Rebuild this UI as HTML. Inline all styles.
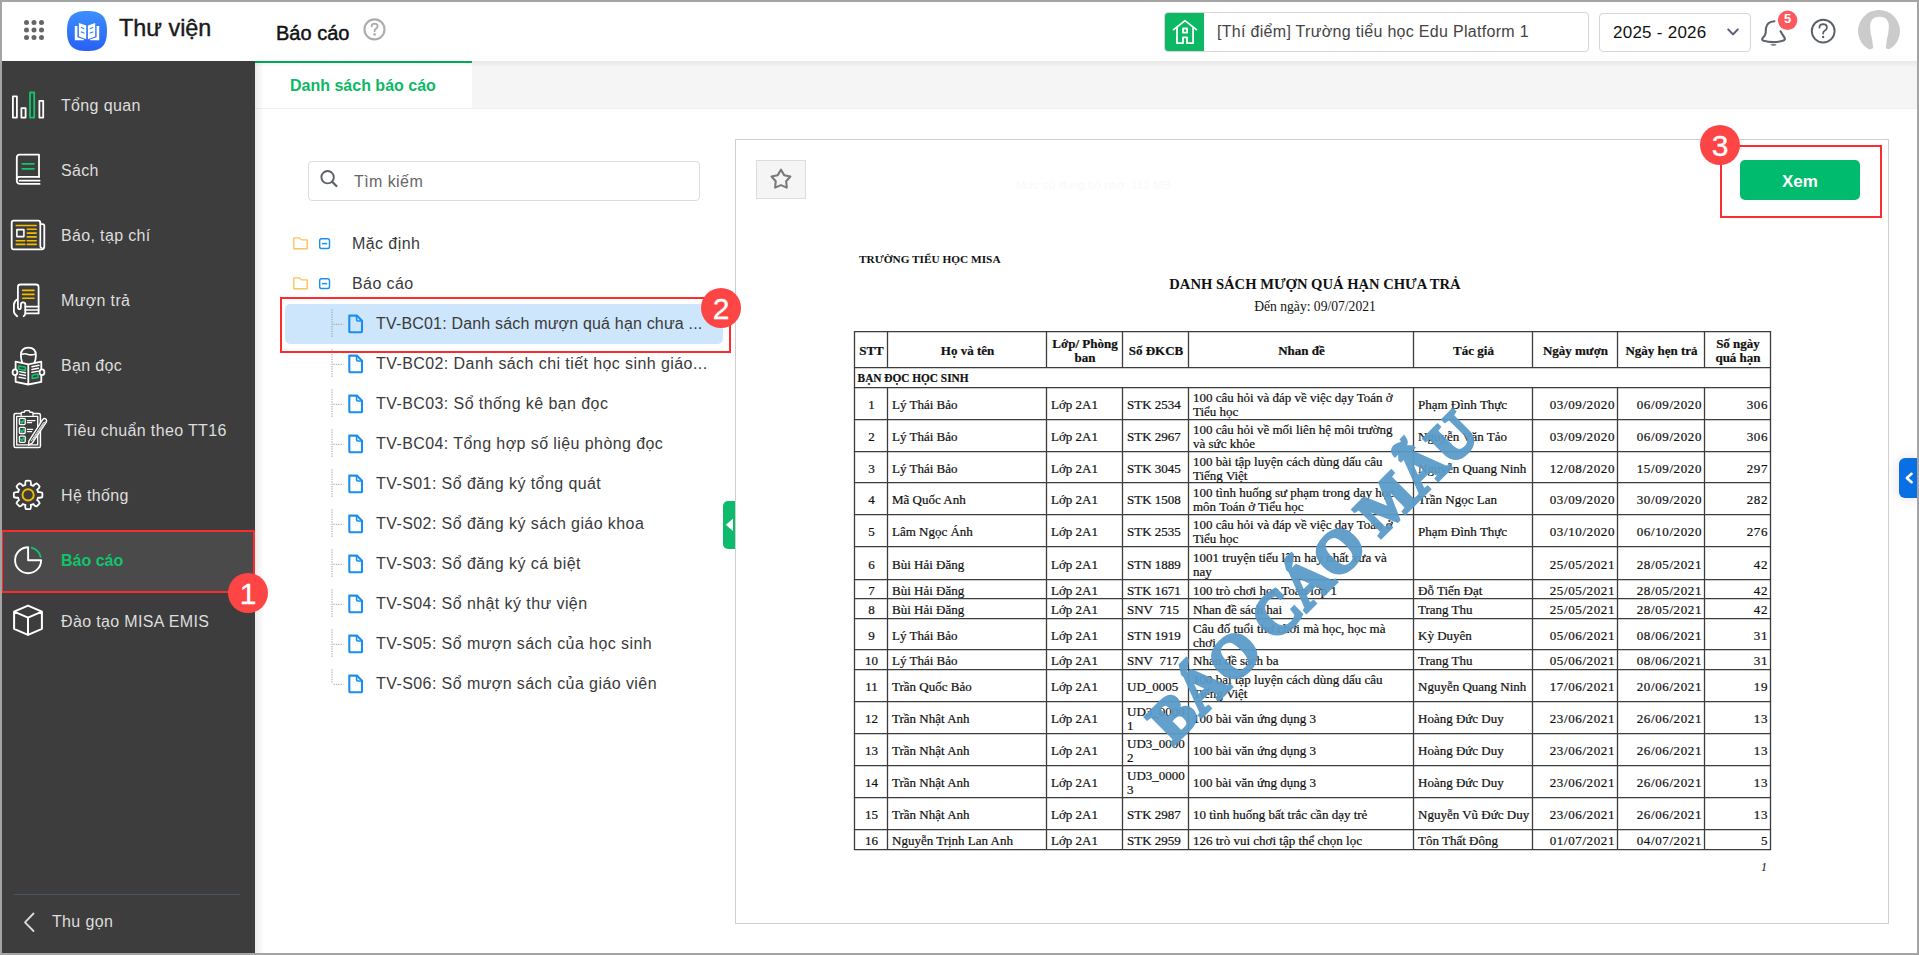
<!DOCTYPE html>
<html><head><meta charset="utf-8">
<style>
*{box-sizing:border-box;margin:0;padding:0}
html,body{width:1919px;height:955px;overflow:hidden;background:#fff;font-family:"Liberation Sans",sans-serif}
.abs{position:absolute}
#frame{position:absolute;left:0;top:0;width:1919px;height:955px;border:2px solid #a4a4a4;overflow:hidden;background:#fff}
#hdr{position:absolute;left:0;top:0;width:1915px;height:59px;background:#fff}
#side{position:absolute;left:0;top:59px;width:253px;height:892px;background:#3d3d3d}
#tabs{position:absolute;left:253px;top:59px;width:1662px;height:48px;background:#f5f5f5}
#tab1{position:absolute;left:0;top:0;width:217px;height:48px;background:#fff;border-top:2px solid #00b25c}
#tab1 span{position:absolute;left:35px;top:14px;font-size:16px;font-weight:bold;color:#0cb864}
.shadow{position:absolute;left:253px;top:59px;width:1662px;height:6px;background:linear-gradient(rgba(0,0,0,0.06),rgba(0,0,0,0))}
.mt{position:absolute;left:59px;font-size:16px;color:#dedede;white-space:nowrap;line-height:16px;letter-spacing:0.35px;margin-top:-1px}
.tr{position:absolute;font-size:16px;color:#3a3a3a;white-space:nowrap;line-height:16px;letter-spacing:0.42px;margin-top:-1px}
.badge{position:absolute;width:40px;height:40px;border-radius:50%;background:#fe4546;color:#fff;font-size:30px;text-align:center;line-height:42.5px;-webkit-text-stroke:0.3px #fff}
.redbox{position:absolute;border:2px solid #fd2b2e}
.c{position:absolute;font-family:"Liberation Serif",serif;font-size:13px;line-height:14px;color:#111;white-space:nowrap;-webkit-text-stroke:0.22px #111}
.doc{position:absolute;font-family:"Liberation Serif",serif;color:#111;white-space:nowrap}
</style></head><body>
<div id="frame">
  <div id="hdr">
    <svg class="abs" style="left:22px;top:18px" width="22" height="22" viewBox="0 0 22 22" fill="#666">
      <circle cx="2.5" cy="2.5" r="2.5"/><circle cx="10" cy="2.5" r="2.5"/><circle cx="17.5" cy="2.5" r="2.5"/>
      <circle cx="2.5" cy="10" r="2.5"/><circle cx="10" cy="10" r="2.5"/><circle cx="17.5" cy="10" r="2.5"/>
      <circle cx="2.5" cy="17.5" r="2.5"/><circle cx="10" cy="17.5" r="2.5"/><circle cx="17.5" cy="17.5" r="2.5"/>
    </svg>
    
    <div class="abs" style="left:117px;top:13px;font-size:23.4px;color:#1a1a1a;-webkit-text-stroke:0.4px #1a1a1a">Thư viện</div>
    <div class="abs" style="left:274px;top:20px;font-size:20px;color:#111;-webkit-text-stroke:0.45px #111">Báo cáo</div>
    <svg class="abs" style="left:-2px;top:-2px" width="400" height="62"><circle cx="374.5" cy="29.4" r="10" fill="none" stroke="#adadad" stroke-width="2.1"/><path d="M371.6 26.2 Q371.8 23.6 374.6 23.6 Q377.6 23.7 377.6 26.2 Q377.6 27.9 375.8 28.9 Q374.6 29.6 374.6 31.3" fill="none" stroke="#adadad" stroke-width="1.9" stroke-linecap="round"/><circle cx="374.6" cy="34.4" r="1.3" fill="#adadad"/></svg>
    <div class="abs" style="left:1162px;top:10px;width:425px;height:40px;border:1px solid #d6d6d6;border-radius:4px;overflow:hidden">
      <div class="abs" style="left:0;top:0;width:39px;height:40px;background:#0cb864"></div>
      <div class="abs" style="left:52px;top:10px;font-size:16px;color:#444;white-space:nowrap;letter-spacing:0.3px">[Thí điểm] Trường tiểu học Edu Platform 1</div>
    </div>
    <div class="abs" style="left:1597px;top:11px;width:152px;height:39px;border:1px solid #d6d6d6;border-radius:4px">
      <div class="abs" style="left:13px;top:9px;font-size:17px;color:#111;letter-spacing:0.25px">2025 - 2026</div>
    </div>
    <svg class="abs" style="left:-2px;top:-2px" width="1919" height="62">
      <defs><linearGradient id="lg" x1="0" y1="0" x2="0" y2="1"><stop offset="0" stop-color="#3c8fff"/><stop offset="1" stop-color="#285ff5"/></linearGradient></defs>
      <path d="M87 11 C101.5 11 107 16.5 107 31 C107 45.5 101.5 51 87 51 C72.5 51 67 45.5 67 31 C67 16.5 72.5 11 87 11 Z" fill="url(#lg)"/>
      <g fill="#fff">
        <path d="M74.8 26 H77.4 V37.2 L84.2 39.4 L83.8 40.2 H74.8 Z"/>
        <path d="M78.9 22.9 L86.2 25.6 V39.3 L78.9 36.4 Z"/>
        <path d="M87.9 25.6 L95.2 22.9 V36.4 L87.9 39.3 Z"/>
        <path d="M99.2 26 H96.6 V37.2 L89.8 39.4 L90.2 40.2 H99.2 Z"/>
      </g>
      <g stroke="#3a80fb" stroke-width="1.1" stroke-linecap="round">
        <path d="M81.2 27.6 L84 28.8 M81.2 31.9 L84 33.1 M90.1 28.8 L92.9 27.6 M90.1 33.1 L92.9 31.9"/>
      </g>
      <!-- house -->
      <g fill="none" stroke="#fff" stroke-width="1.8" stroke-linecap="round" stroke-linejoin="round">
        <path d="M1173.6 29.6 L1185 20.6 L1196.4 29.6"/>
        <path d="M1177 27.6 V43.2 H1183 V37.4 H1187 V43.2 H1193.1 V27.6"/>
        <rect x="1183" y="28.5" width="4.1" height="4.2"/>
      </g>
      <!-- chevron -->
      <path d="M1728.2 29.4 L1733 34.4 L1737.8 29.4" fill="none" stroke="#5a5c78" stroke-width="2" stroke-linecap="round" stroke-linejoin="round"/>
      <!-- bell -->
      <path d="M1774.4 21.3 Q1767.2 21.8 1766.1 27.6 Q1765.7 30.6 1765.7 32.8 Q1765.3 35.4 1762.7 38 Q1761.3 39.9 1763.6 40.7 Q1768 42.1 1773.5 42.1 Q1779 42.1 1783.5 40.5 Q1785.5 39.7 1784.6 37.9 L1780.5 31.3" fill="none" stroke="#5c6370" stroke-width="2.1" stroke-linecap="round" stroke-linejoin="round"/>
      <path d="M1770.3 44.2 H1776.7 Q1775.6 45.8 1773.5 45.8 Q1771.4 45.8 1770.3 44.2 Z" fill="#5c6370"/>
      <circle cx="1787.6" cy="20.3" r="9.7" fill="#fd585d"/>
      <text x="1787.7" y="23.2" font-size="13" font-weight="bold" fill="#fff" text-anchor="middle" font-family="Liberation Sans">5</text>
      <!-- help -->
      <circle cx="1823.2" cy="31.1" r="11.4" fill="none" stroke="#5a6069" stroke-width="1.9"/>
      <path d="M1819.4 27.6 Q1819.6 24.2 1823.1 24.2 Q1826.9 24.3 1826.9 27.5 Q1826.9 29.6 1824.6 30.8 Q1823.1 31.7 1823.1 33.6" fill="none" stroke="#5a6069" stroke-width="1.8" stroke-linecap="round"/>
      <circle cx="1823.1" cy="37" r="1.2" fill="#5a6069"/>
      <!-- avatar -->
      <circle cx="1879" cy="31" r="21" fill="#cbcbcb"/>
      <path d="M1873.4 50 L1872.2 40 Q1870.2 33 1870.1 26 Q1870.3 16.7 1879.5 16.7 Q1888.7 16.7 1888.9 26 Q1888.8 33 1886.8 40 L1885.6 50 Z" fill="#fff"/>
      <ellipse cx="1879.5" cy="56.5" rx="14.5" ry="9.5" fill="#fff"/>
    </svg>
  </div>
  <div id="side"></div>
  <div id="tabs"><div id="tab1"><span>Danh sách báo cáo</span></div></div>
  <div class="shadow"></div>
  <div class="abs" style="left:253px;top:106px;width:1662px;height:1px;background:#f0f0f0"></div>
  <div class="abs" style="left:253px;top:59px;width:9px;height:892px;background:linear-gradient(90deg,rgba(0,0,0,0.08),rgba(0,0,0,0))"></div>

  <!-- sidebar -->
  <div class="abs" style="left:0;top:529px;width:253px;height:62px;background:#4a4a4a"></div>

  <svg class="abs" style="left:-2px;top:-2px" width="260" height="955" fill="none" stroke="#fff" stroke-width="1.8" stroke-linejoin="round" stroke-linecap="round">
    <!-- tong quan -->
    <rect x="12.9" y="96.4" width="4" height="21.2"/>
    <rect x="21.4" y="108.2" width="4.2" height="9.4"/>
    <rect x="30" y="92.5" width="4.2" height="25.1" stroke="#12c56f"/>
    <rect x="39.4" y="100.8" width="3.8" height="16.8"/>
    <!-- sach -->
    <path d="M39 176.9 V154.6 H19.6 Q16.8 154.6 16.8 157.6 V180.4 Q16.8 183.9 20.4 183.9 H39.6"/>
    <path d="M39 176.9 H19.2 Q16.8 176.9 16.8 179.3"/>
    <path d="M19.6 180.7 H39.6" stroke-width="1.7"/>
    <path d="M22.3 163.8 H33.9 M22.3 168.8 H33.9" stroke="#12c56f" stroke-width="1.8"/>
    <!-- bao tap chi -->
    <path d="M40.3 222.6 Q40.3 220.6 38.3 220.6 H13.7 Q11.7 220.6 11.7 222.6 V247.2 Q11.7 249.3 13.8 249.3 H41.6 Q44.3 249.3 44.3 246.6 V226 Q44.3 224.2 42.6 224.2 H40.6"/>
    <path d="M40.3 222.6 V246.2 Q40.3 247.6 41.6 247.8" stroke-width="1.7"/>
    <path d="M16.3 225.5 H36.2 M27.3 229.2 H36.2 M27.3 233.1 H36.2 M27.3 236.9 H36.2 M16.3 240.7 H24.8 M27.3 240.7 H36.2 M16.3 244.4 H24.8 M27.3 244.4 H36.2" stroke="#f2bd00" stroke-width="1.6"/>
    <rect x="16.9" y="229.6" width="7" height="7" stroke-width="1.6"/>
    <!-- muon tra -->
    <path d="M17.9 307.2 V287 Q17.9 284.5 20.5 284.5 H36 Q38.6 284.5 38.6 287 V313.4 H25.3"/>
    <path d="M25.3 306.6 H38.6 M25.3 310 H38.6" stroke-width="1.7"/>
    <path d="M22.7 290.4 H34 M22.7 294.4 H34 M22.7 298.3 H34" stroke="#f2bd00" stroke-width="1.6"/>
    <path d="M17.9 307 Q17.9 309.2 19.4 309.2 Q20.9 309.2 20.9 307 V304.5 Q20.9 302.4 23.1 302.4 Q25.3 302.4 25.3 304.5 V313.5 Q25.3 315 23.6 316.3"/>
    <path d="M17.1 299.5 Q13.9 301.5 13.9 305 V311.5 Q13.9 313.6 17.2 316.3"/>
    <!-- ban doc -->
    <path d="M22.2 362.4 Q20.9 359.2 20.9 355.3 Q20.9 347.7 28.4 347.7 Q35.9 347.7 35.9 355.3 Q35.9 359.2 34.6 362.4"/>
    <path d="M21.3 354.6 Q24.8 353.1 27.4 354.3 Q30 355.5 35.4 354.2" stroke-width="1.6"/>
    <path d="M28.3 364.3 L15.6 361.7 V381.9 L28.3 384.5 L41.3 381.9 V361.7 Z M28.3 364.3 V384.5"/>
    <ellipse cx="15" cy="372.2" rx="2.4" ry="2.9" fill="#3d3d3d"/>
    <ellipse cx="42" cy="372.2" rx="2.4" ry="2.9" fill="#3d3d3d"/>
    <path d="M18.6 365.9 L25.4 367.3 V370.4 L18.6 369 Z" stroke="#12c56f" stroke-width="1.5"/>
    <path d="M32.2 375.2 L38 374 V377.4 L32.2 378.6 Z" stroke="#12c56f" stroke-width="1.5"/>
    <path d="M19.6 371.6 L25.4 372.7 M19.6 374.4 L25.4 375.5 M19 377.3 L25.4 378.4 M31.9 366.7 L39 365.3 M31.9 369.5 L38.4 368.3 M31.9 372.3 L38.4 371.1" stroke-width="1.4"/>
    <!-- tieu chuan -->
    <rect x="14" y="413.6" width="26.4" height="34" rx="1.6" stroke-width="1.5"/>
    <rect x="16.7" y="416.4" width="21" height="28.4" stroke-width="1.3"/>
    <path d="M21.2 415.2 V413 Q21.2 412.2 22.2 412.2 H24.3 L25 410.6 H29.2 L29.9 412.2 H32 Q33 412.2 33 413 V415.2" stroke-width="1.4" fill="#3d3d3d"/>
    <rect x="19.4" y="418.4" width="5.8" height="6.2" rx="1" stroke-width="1.3"/>
    <rect x="19.4" y="427.3" width="5.8" height="6.2" rx="1" stroke-width="1.3"/>
    <rect x="19.4" y="436.1" width="5.8" height="6.2" rx="1" stroke-width="1.3"/>
    <path d="M20.6 421.3 L21.9 423 L24 420 M20.6 430.2 L21.9 431.9 L24 428.9 M20.6 439 L21.9 440.7 L24 437.7" stroke="#12c56f" stroke-width="1.7"/>
    <path d="M27.4 420.6 H35 M27.4 422.6 H31.6 M27.4 429.4 H32.6 M27.4 431.6 H31.6" stroke-width="1.2"/>
    <path d="M42.8 419.4 Q44.6 417.6 46.3 419.6 Q47.1 420.8 46.3 422.1 L32.2 443.2 L28.7 445.2 L28.9 441.2 Z" stroke-width="1.4" fill="#3d3d3d"/>
    <path d="M43.4 422.6 L31.2 441 M45.2 421.6 L32.9 440" stroke-width="0.8"/>
    <!-- he thong -->
    <path d="M25.41 484.85 Q24.93 482.43 25.86 480.78 A14.3 14.3 0 0 1 30.34 480.78 Q31.27 482.43 30.79 484.85 A10.4 10.4 0 0 1 33.30 485.89 Q34.68 483.84 36.51 483.33 A14.3 14.3 0 0 1 39.67 486.49 Q39.16 488.32 37.11 489.70 A10.4 10.4 0 0 1 38.15 492.21 Q40.57 491.73 42.22 492.66 A14.3 14.3 0 0 1 42.22 497.14 Q40.57 498.07 38.15 497.59 A10.4 10.4 0 0 1 37.11 500.10 Q39.16 501.48 39.67 503.31 A14.3 14.3 0 0 1 36.51 506.47 Q34.68 505.96 33.30 503.91 A10.4 10.4 0 0 1 30.79 504.95 Q31.27 507.37 30.34 509.02 A14.3 14.3 0 0 1 25.86 509.02 Q24.93 507.37 25.41 504.95 A10.4 10.4 0 0 1 22.90 503.91 Q21.52 505.96 19.69 506.47 A14.3 14.3 0 0 1 16.53 503.31 Q17.04 501.48 19.09 500.10 A10.4 10.4 0 0 1 18.05 497.59 Q15.63 498.07 13.98 497.14 A14.3 14.3 0 0 1 13.98 492.66 Q15.63 491.73 18.05 492.21 A10.4 10.4 0 0 1 19.09 489.70 Q17.04 488.32 16.53 486.49 A14.3 14.3 0 0 1 19.69 483.33 Q21.52 483.84 22.90 485.89 A10.4 10.4 0 0 1 25.41 484.85 Z" stroke-width="1.8"/>
    <circle cx="28.1" cy="494.9" r="5.6" stroke="#f2bd00" stroke-width="1.9"/>
    <!-- bao cao -->
    <path d="M28.1 547.2 V560.2 H41.1 A13 13 0 1 1 28.1 547.2" stroke-width="1.9"/>
    <path d="M31.6 547.7 A13 13 0 0 1 40.6 556.7" stroke="#12c56f" stroke-width="1.9"/>
    <!-- cube -->
    <path d="M28 605.6 L41.9 611.7 V628.8 L28 634.9 L14.1 628.8 V611.7 Z M14.1 611.7 L28 617.6 L41.9 611.7 M28 617.6 V634.9" stroke-width="2"/>
    <!-- thu gon -->
    <path d="M33.5 913.5 L25 922.3 L33.5 931" stroke="#ddd"/>
  </svg>

  <div class="mt" style="top:97px">Tổng quan</div>
  <div class="mt" style="top:162px">Sách</div>
  <div class="mt" style="top:227px">Báo, tạp chí</div>
  <div class="mt" style="top:292px">Mượn trả</div>
  <div class="mt" style="top:357px">Bạn đọc</div>
  <div class="mt" style="top:422px;left:62px">Tiêu chuẩn theo TT16</div>
  <div class="mt" style="top:487px">Hệ thống</div>
  <div class="mt" style="top:552px;color:#10c46c;font-weight:bold;letter-spacing:0">Báo cáo</div>
  <div class="mt" style="top:613px">Đào tạo MISA EMIS</div>
  <div class="abs" style="left:12px;top:892px;width:226px;height:1px;background:#4b5662"></div>
  <div class="mt" style="top:913px;left:50px">Thu gọn</div>

  <!-- tree -->
  <div class="abs" style="left:306px;top:159px;width:392px;height:40px;border:1px solid #dcdcdc;border-radius:4px"></div>
  <div class="tr" style="left:352px;top:173px;color:#666">Tìm kiếm</div>
  <div class="abs" style="left:283px;top:302px;width:438px;height:40px;background:#cde6fb;border-radius:5px"></div>
  <svg class="abs" style="left:-2px;top:-2px" width="760" height="955" fill="none"><path d="M293.8 248.7 V237.9 H299.6 L301.4 239.9 H307.2 V248.7 Z" stroke="#fcc45a" stroke-width="1.4" stroke-linejoin="round"/><rect x="319.7" y="238.70000000000002" width="9.8" height="9.8" rx="1.8" stroke="#1c8ff0" stroke-width="1.4"/><path d="M322 243.6 H327.2" stroke="#1c8ff0" stroke-width="1.5"/><path d="M293.8 288.7 V277.9 H299.6 L301.4 279.9 H307.2 V288.7 Z" stroke="#fcc45a" stroke-width="1.4" stroke-linejoin="round"/><rect x="319.7" y="278.7" width="9.8" height="9.8" rx="1.8" stroke="#1c8ff0" stroke-width="1.4"/><path d="M322 283.59999999999997 H327.2" stroke="#1c8ff0" stroke-width="1.5"/><path d="M349.3 315.6 H356.8 L362 320.8 V331.6 Q362 332.20000000000005 361.4 332.20000000000005 H349.9 Q349.3 332.20000000000005 349.3 331.6 Z" stroke="#1a8ef0" stroke-width="2.1" stroke-linejoin="round"/><path d="M356.6 315.8 V319.8 Q356.6 321.0 357.8 321.0 H361.8" stroke="#1a8ef0" stroke-width="1.6"/><path d="M332 309.3 V337.3" stroke="#999" stroke-width="1" stroke-dasharray="1.2 1.2"/><path d="M333.5 324.3 H343.5" stroke="#999" stroke-width="1" stroke-dasharray="1.2 1.2"/><path d="M349.3 355.6 H356.8 L362 360.8 V371.6 Q362 372.20000000000005 361.4 372.20000000000005 H349.9 Q349.3 372.20000000000005 349.3 371.6 Z" stroke="#1a8ef0" stroke-width="2.1" stroke-linejoin="round"/><path d="M356.6 355.8 V359.8 Q356.6 361.0 357.8 361.0 H361.8" stroke="#1a8ef0" stroke-width="1.6"/><path d="M332 349.3 V377.3" stroke="#999" stroke-width="1" stroke-dasharray="1.2 1.2"/><path d="M333.5 364.3 H343.5" stroke="#999" stroke-width="1" stroke-dasharray="1.2 1.2"/><path d="M349.3 395.6 H356.8 L362 400.8 V411.6 Q362 412.20000000000005 361.4 412.20000000000005 H349.9 Q349.3 412.20000000000005 349.3 411.6 Z" stroke="#1a8ef0" stroke-width="2.1" stroke-linejoin="round"/><path d="M356.6 395.8 V399.8 Q356.6 401.0 357.8 401.0 H361.8" stroke="#1a8ef0" stroke-width="1.6"/><path d="M332 389.3 V417.3" stroke="#999" stroke-width="1" stroke-dasharray="1.2 1.2"/><path d="M333.5 404.3 H343.5" stroke="#999" stroke-width="1" stroke-dasharray="1.2 1.2"/><path d="M349.3 435.6 H356.8 L362 440.8 V451.6 Q362 452.20000000000005 361.4 452.20000000000005 H349.9 Q349.3 452.20000000000005 349.3 451.6 Z" stroke="#1a8ef0" stroke-width="2.1" stroke-linejoin="round"/><path d="M356.6 435.8 V439.8 Q356.6 441.0 357.8 441.0 H361.8" stroke="#1a8ef0" stroke-width="1.6"/><path d="M332 429.3 V457.3" stroke="#999" stroke-width="1" stroke-dasharray="1.2 1.2"/><path d="M333.5 444.3 H343.5" stroke="#999" stroke-width="1" stroke-dasharray="1.2 1.2"/><path d="M349.3 475.6 H356.8 L362 480.8 V491.6 Q362 492.20000000000005 361.4 492.20000000000005 H349.9 Q349.3 492.20000000000005 349.3 491.6 Z" stroke="#1a8ef0" stroke-width="2.1" stroke-linejoin="round"/><path d="M356.6 475.8 V479.8 Q356.6 481.0 357.8 481.0 H361.8" stroke="#1a8ef0" stroke-width="1.6"/><path d="M332 469.3 V497.3" stroke="#999" stroke-width="1" stroke-dasharray="1.2 1.2"/><path d="M333.5 484.3 H343.5" stroke="#999" stroke-width="1" stroke-dasharray="1.2 1.2"/><path d="M349.3 515.5999999999999 H356.8 L362 520.8 V531.5999999999999 Q362 532.1999999999999 361.4 532.1999999999999 H349.9 Q349.3 532.1999999999999 349.3 531.5999999999999 Z" stroke="#1a8ef0" stroke-width="2.1" stroke-linejoin="round"/><path d="M356.6 515.8 V519.8 Q356.6 520.9999999999999 357.8 520.9999999999999 H361.8" stroke="#1a8ef0" stroke-width="1.6"/><path d="M332 509.29999999999995 V537.3" stroke="#999" stroke-width="1" stroke-dasharray="1.2 1.2"/><path d="M333.5 524.3 H343.5" stroke="#999" stroke-width="1" stroke-dasharray="1.2 1.2"/><path d="M349.3 555.5999999999999 H356.8 L362 560.8 V571.5999999999999 Q362 572.1999999999999 361.4 572.1999999999999 H349.9 Q349.3 572.1999999999999 349.3 571.5999999999999 Z" stroke="#1a8ef0" stroke-width="2.1" stroke-linejoin="round"/><path d="M356.6 555.8 V559.8 Q356.6 560.9999999999999 357.8 560.9999999999999 H361.8" stroke="#1a8ef0" stroke-width="1.6"/><path d="M332 549.3 V577.3" stroke="#999" stroke-width="1" stroke-dasharray="1.2 1.2"/><path d="M333.5 564.3 H343.5" stroke="#999" stroke-width="1" stroke-dasharray="1.2 1.2"/><path d="M349.3 595.5999999999999 H356.8 L362 600.8 V611.5999999999999 Q362 612.1999999999999 361.4 612.1999999999999 H349.9 Q349.3 612.1999999999999 349.3 611.5999999999999 Z" stroke="#1a8ef0" stroke-width="2.1" stroke-linejoin="round"/><path d="M356.6 595.8 V599.8 Q356.6 600.9999999999999 357.8 600.9999999999999 H361.8" stroke="#1a8ef0" stroke-width="1.6"/><path d="M332 589.3 V617.3" stroke="#999" stroke-width="1" stroke-dasharray="1.2 1.2"/><path d="M333.5 604.3 H343.5" stroke="#999" stroke-width="1" stroke-dasharray="1.2 1.2"/><path d="M349.3 635.5999999999999 H356.8 L362 640.8 V651.5999999999999 Q362 652.1999999999999 361.4 652.1999999999999 H349.9 Q349.3 652.1999999999999 349.3 651.5999999999999 Z" stroke="#1a8ef0" stroke-width="2.1" stroke-linejoin="round"/><path d="M356.6 635.8 V639.8 Q356.6 640.9999999999999 357.8 640.9999999999999 H361.8" stroke="#1a8ef0" stroke-width="1.6"/><path d="M332 629.3 V657.3" stroke="#999" stroke-width="1" stroke-dasharray="1.2 1.2"/><path d="M333.5 644.3 H343.5" stroke="#999" stroke-width="1" stroke-dasharray="1.2 1.2"/><path d="M349.3 675.5999999999999 H356.8 L362 680.8 V691.5999999999999 Q362 692.1999999999999 361.4 692.1999999999999 H349.9 Q349.3 692.1999999999999 349.3 691.5999999999999 Z" stroke="#1a8ef0" stroke-width="2.1" stroke-linejoin="round"/><path d="M356.6 675.8 V679.8 Q356.6 680.9999999999999 357.8 680.9999999999999 H361.8" stroke="#1a8ef0" stroke-width="1.6"/><path d="M332 669.3 V683.3" stroke="#999" stroke-width="1" stroke-dasharray="1.2 1.2"/><path d="M333.5 684.3 H343.5" stroke="#999" stroke-width="1" stroke-dasharray="1.2 1.2"/>
    <circle cx="327.6" cy="177.2" r="6.2" stroke="#5a5f69" stroke-width="1.9"/>
    <path d="M332.2 181.8 L336.4 186" stroke="#5a5f69" stroke-width="2.3" stroke-linecap="round"/>
  </svg>
  <div class="tr" style="left:350px;top:235px">Mặc định</div>
  <div class="tr" style="left:350px;top:275px">Báo cáo</div>
  <div class="tr" style="left:374px;top:315px;letter-spacing:0.18px">TV-BC01: Danh sách mượn quá hạn chưa ...</div>
  <div class="tr" style="left:374px;top:355px">TV-BC02: Danh sách chi tiết học sinh giáo...</div>
  <div class="tr" style="left:374px;top:395px">TV-BC03: Sổ thống kê bạn đọc</div>
  <div class="tr" style="left:374px;top:435px">TV-BC04: Tổng hợp số liệu phòng đọc</div>
  <div class="tr" style="left:374px;top:475px">TV-S01: Sổ đăng ký tổng quát</div>
  <div class="tr" style="left:374px;top:515px">TV-S02: Sổ đăng ký sách giáo khoa</div>
  <div class="tr" style="left:374px;top:555px">TV-S03: Sổ đăng ký cá biệt</div>
  <div class="tr" style="left:374px;top:595px">TV-S04: Sổ nhật ký thư viện</div>
  <div class="tr" style="left:374px;top:635px">TV-S05: Sổ mượn sách của học sinh</div>
  <div class="tr" style="left:374px;top:675px">TV-S06: Sổ mượn sách của giáo viên</div>

  <!-- report -->
  <div class="abs" style="left:1014px;top:176px;font-size:11.6px;color:#f9f9f9;white-space:nowrap">Mức sử dụng bộ nhớ: 112 MB</div>
  <div class="abs" style="left:733px;top:137px;width:1154px;height:785px;border:1px solid #cfcfcf"></div>
  <div class="abs" style="left:754px;top:158px;width:50px;height:39px;border:1px solid #ddd;background:#f5f5f5"></div>
    <svg class="abs" style="left:-2px;top:-2px" width="1919" height="955" fill="none"><polygon points="780.95,169.70 784.18,175.15 790.37,176.54 786.18,181.30 786.77,187.61 780.95,185.10 775.13,187.61 775.72,181.30 771.53,176.54 777.72,175.15" stroke="#7a7a7a" stroke-width="2.1" stroke-linejoin="round"/></svg>
  <div class="abs" style="left:1738px;top:158px;width:120px;height:40px;border-radius:5px;background:#00bb6e;color:#fff;font-weight:bold;font-size:17px;text-align:center;line-height:43px">Xem</div>
  <div class="doc" style="left:857px;top:251px;font-size:11.3px;font-weight:bold">TRƯỜNG TIỂU HỌC MISA</div>
  <div class="doc" style="left:1065px;width:496px;text-align:center;top:274px;font-size:14.6px;font-weight:bold">DANH SÁCH MƯỢN QUÁ HẠN CHƯA TRẢ</div>
  <div class="doc" style="left:1065px;width:496px;text-align:center;top:297px;font-size:13.6px">Đến ngày: 09/07/2021</div>
<svg class="abs" style="left:-2px;top:-2px" width="1919" height="955"><g stroke="#3c3c3c" stroke-width="1.3"><line x1="853.9" y1="331.7" x2="1771.1" y2="331.7"/><line x1="853.9" y1="367.7" x2="1771.1" y2="367.7"/><line x1="853.9" y1="387.7" x2="1771.1" y2="387.7"/><line x1="853.9" y1="419.7" x2="1771.1" y2="419.7"/><line x1="853.9" y1="451.7" x2="1771.1" y2="451.7"/><line x1="853.9" y1="482.7" x2="1771.1" y2="482.7"/><line x1="853.9" y1="514.7" x2="1771.1" y2="514.7"/><line x1="853.9" y1="546.7" x2="1771.1" y2="546.7"/><line x1="853.9" y1="579.7" x2="1771.1" y2="579.7"/><line x1="853.9" y1="598.7" x2="1771.1" y2="598.7"/><line x1="853.9" y1="618.7" x2="1771.1" y2="618.7"/><line x1="853.9" y1="649.7" x2="1771.1" y2="649.7"/><line x1="853.9" y1="669.7" x2="1771.1" y2="669.7"/><line x1="853.9" y1="701.7" x2="1771.1" y2="701.7"/><line x1="853.9" y1="733.7" x2="1771.1" y2="733.7"/><line x1="853.9" y1="765.7" x2="1771.1" y2="765.7"/><line x1="853.9" y1="797.7" x2="1771.1" y2="797.7"/><line x1="853.9" y1="829.7" x2="1771.1" y2="829.7"/><line x1="853.9" y1="849.7" x2="1771.1" y2="849.7"/><line x1="854.5" y1="331.7" x2="854.5" y2="849.7"/><line x1="887.5" y1="331.7" x2="887.5" y2="367.7"/><line x1="887.5" y1="387.7" x2="887.5" y2="849.7"/><line x1="1046.5" y1="331.7" x2="1046.5" y2="367.7"/><line x1="1046.5" y1="387.7" x2="1046.5" y2="849.7"/><line x1="1122.5" y1="331.7" x2="1122.5" y2="367.7"/><line x1="1122.5" y1="387.7" x2="1122.5" y2="849.7"/><line x1="1188.5" y1="331.7" x2="1188.5" y2="367.7"/><line x1="1188.5" y1="387.7" x2="1188.5" y2="849.7"/><line x1="1413.5" y1="331.7" x2="1413.5" y2="367.7"/><line x1="1413.5" y1="387.7" x2="1413.5" y2="849.7"/><line x1="1532.5" y1="331.7" x2="1532.5" y2="367.7"/><line x1="1532.5" y1="387.7" x2="1532.5" y2="849.7"/><line x1="1617.5" y1="331.7" x2="1617.5" y2="367.7"/><line x1="1617.5" y1="387.7" x2="1617.5" y2="849.7"/><line x1="1704.5" y1="331.7" x2="1704.5" y2="367.7"/><line x1="1704.5" y1="387.7" x2="1704.5" y2="849.7"/><line x1="1770.5" y1="331.7" x2="1770.5" y2="849.7"/></g></svg>
<div class="c" style="left:853px;top:342.0px;width:33px;text-align:center;font-weight:bold;">STT</div>
<div class="c" style="left:886px;top:342.0px;width:159px;text-align:center;font-weight:bold;">Họ và tên</div>
<div class="c" style="left:1045px;top:335.0px;width:76px;text-align:center;font-weight:bold;">Lớp/ Phòng<br>ban</div>
<div class="c" style="left:1121px;top:342.0px;width:66px;text-align:center;font-weight:bold;">Số ĐKCB</div>
<div class="c" style="left:1187px;top:342.0px;width:225px;text-align:center;font-weight:bold;">Nhan đề</div>
<div class="c" style="left:1412px;top:342.0px;width:119px;text-align:center;font-weight:bold;">Tác giả</div>
<div class="c" style="left:1531px;top:342.0px;width:85px;text-align:center;font-weight:bold;">Ngày mượn</div>
<div class="c" style="left:1616px;top:342.0px;width:87px;text-align:center;font-weight:bold;">Ngày hẹn trả</div>
<div class="c" style="left:1703px;top:335.0px;width:66px;text-align:center;font-weight:bold;">Số ngày<br>quá hạn</div>
<div class="c" style="left:853px;top:369.0px;padding-left:3px;font-weight:bold;transform:scaleX(0.87);transform-origin:0 0">BẠN ĐỌC HỌC SINH</div>
<div class="c" style="left:853px;top:396.0px;width:33px;text-align:center;">1</div>
<div class="c" style="left:886px;top:396.0px;width:159px;text-align:left;padding-left:4px;">Lý Thái Bảo</div>
<div class="c" style="left:1045px;top:396.0px;width:76px;text-align:left;padding-left:4px;">Lớp 2A1</div>
<div class="c" style="left:1121px;top:396.0px;width:66px;text-align:left;padding-left:4px;">STK 2534</div>
<div class="c" style="left:1187px;top:389.0px;width:225px;text-align:left;padding-left:4px;">100 câu hỏi và đáp về việc dạy Toán ở<br>Tiểu học</div>
<div class="c" style="left:1412px;top:396.0px;width:119px;text-align:left;padding-left:4px;">Phạm Đình Thực</div>
<div class="c" style="left:1531px;top:396.0px;width:85px;text-align:right;padding-right:3px;letter-spacing:0.6px;">03/09/2020</div>
<div class="c" style="left:1616px;top:396.0px;width:87px;text-align:right;padding-right:3px;letter-spacing:0.6px;">06/09/2020</div>
<div class="c" style="left:1703px;top:396.0px;width:66px;text-align:right;padding-right:3px;letter-spacing:0.6px;">306</div>
<div class="c" style="left:853px;top:428.0px;width:33px;text-align:center;">2</div>
<div class="c" style="left:886px;top:428.0px;width:159px;text-align:left;padding-left:4px;">Lý Thái Bảo</div>
<div class="c" style="left:1045px;top:428.0px;width:76px;text-align:left;padding-left:4px;">Lớp 2A1</div>
<div class="c" style="left:1121px;top:428.0px;width:66px;text-align:left;padding-left:4px;">STK 2967</div>
<div class="c" style="left:1187px;top:421.0px;width:225px;text-align:left;padding-left:4px;">100 câu hỏi về mối liên hệ môi trường<br>và sức khỏe</div>
<div class="c" style="left:1412px;top:428.0px;width:119px;text-align:left;padding-left:4px;">Nguyễn Văn Tảo</div>
<div class="c" style="left:1531px;top:428.0px;width:85px;text-align:right;padding-right:3px;letter-spacing:0.6px;">03/09/2020</div>
<div class="c" style="left:1616px;top:428.0px;width:87px;text-align:right;padding-right:3px;letter-spacing:0.6px;">06/09/2020</div>
<div class="c" style="left:1703px;top:428.0px;width:66px;text-align:right;padding-right:3px;letter-spacing:0.6px;">306</div>
<div class="c" style="left:853px;top:459.5px;width:33px;text-align:center;">3</div>
<div class="c" style="left:886px;top:459.5px;width:159px;text-align:left;padding-left:4px;">Lý Thái Bảo</div>
<div class="c" style="left:1045px;top:459.5px;width:76px;text-align:left;padding-left:4px;">Lớp 2A1</div>
<div class="c" style="left:1121px;top:459.5px;width:66px;text-align:left;padding-left:4px;">STK 3045</div>
<div class="c" style="left:1187px;top:452.5px;width:225px;text-align:left;padding-left:4px;">100 bài tập luyện cách dùng dấu câu<br>Tiếng Việt</div>
<div class="c" style="left:1412px;top:459.5px;width:119px;text-align:left;padding-left:4px;">Nguyễn Quang Ninh</div>
<div class="c" style="left:1531px;top:459.5px;width:85px;text-align:right;padding-right:3px;letter-spacing:0.6px;">12/08/2020</div>
<div class="c" style="left:1616px;top:459.5px;width:87px;text-align:right;padding-right:3px;letter-spacing:0.6px;">15/09/2020</div>
<div class="c" style="left:1703px;top:459.5px;width:66px;text-align:right;padding-right:3px;letter-spacing:0.6px;">297</div>
<div class="c" style="left:853px;top:491.0px;width:33px;text-align:center;">4</div>
<div class="c" style="left:886px;top:491.0px;width:159px;text-align:left;padding-left:4px;">Mã Quốc Anh</div>
<div class="c" style="left:1045px;top:491.0px;width:76px;text-align:left;padding-left:4px;">Lớp 2A1</div>
<div class="c" style="left:1121px;top:491.0px;width:66px;text-align:left;padding-left:4px;">STK 1508</div>
<div class="c" style="left:1187px;top:484.0px;width:225px;text-align:left;padding-left:4px;">100 tình huống sư phạm trong dạy học<br>môn Toán ở Tiểu học</div>
<div class="c" style="left:1412px;top:491.0px;width:119px;text-align:left;padding-left:4px;">Trần Ngọc Lan</div>
<div class="c" style="left:1531px;top:491.0px;width:85px;text-align:right;padding-right:3px;letter-spacing:0.6px;">03/09/2020</div>
<div class="c" style="left:1616px;top:491.0px;width:87px;text-align:right;padding-right:3px;letter-spacing:0.6px;">30/09/2020</div>
<div class="c" style="left:1703px;top:491.0px;width:66px;text-align:right;padding-right:3px;letter-spacing:0.6px;">282</div>
<div class="c" style="left:853px;top:523.0px;width:33px;text-align:center;">5</div>
<div class="c" style="left:886px;top:523.0px;width:159px;text-align:left;padding-left:4px;">Lâm Ngọc Ánh</div>
<div class="c" style="left:1045px;top:523.0px;width:76px;text-align:left;padding-left:4px;">Lớp 2A1</div>
<div class="c" style="left:1121px;top:523.0px;width:66px;text-align:left;padding-left:4px;">STK 2535</div>
<div class="c" style="left:1187px;top:516.0px;width:225px;text-align:left;padding-left:4px;">100 câu hỏi và đáp về việc dạy Toán ở<br>Tiểu học</div>
<div class="c" style="left:1412px;top:523.0px;width:119px;text-align:left;padding-left:4px;">Phạm Đình Thực</div>
<div class="c" style="left:1531px;top:523.0px;width:85px;text-align:right;padding-right:3px;letter-spacing:0.6px;">03/10/2020</div>
<div class="c" style="left:1616px;top:523.0px;width:87px;text-align:right;padding-right:3px;letter-spacing:0.6px;">06/10/2020</div>
<div class="c" style="left:1703px;top:523.0px;width:66px;text-align:right;padding-right:3px;letter-spacing:0.6px;">276</div>
<div class="c" style="left:853px;top:555.5px;width:33px;text-align:center;">6</div>
<div class="c" style="left:886px;top:555.5px;width:159px;text-align:left;padding-left:4px;">Bùi Hải Đăng</div>
<div class="c" style="left:1045px;top:555.5px;width:76px;text-align:left;padding-left:4px;">Lớp 2A1</div>
<div class="c" style="left:1121px;top:555.5px;width:66px;text-align:left;padding-left:4px;">STN 1889</div>
<div class="c" style="left:1187px;top:548.5px;width:225px;text-align:left;padding-left:4px;">1001 truyện tiếu lâm hay nhất xưa và<br>nay</div>
<div class="c" style="left:1531px;top:555.5px;width:85px;text-align:right;padding-right:3px;letter-spacing:0.6px;">25/05/2021</div>
<div class="c" style="left:1616px;top:555.5px;width:87px;text-align:right;padding-right:3px;letter-spacing:0.6px;">28/05/2021</div>
<div class="c" style="left:1703px;top:555.5px;width:66px;text-align:right;padding-right:3px;letter-spacing:0.6px;">42</div>
<div class="c" style="left:853px;top:581.5px;width:33px;text-align:center;">7</div>
<div class="c" style="left:886px;top:581.5px;width:159px;text-align:left;padding-left:4px;">Bùi Hải Đăng</div>
<div class="c" style="left:1045px;top:581.5px;width:76px;text-align:left;padding-left:4px;">Lớp 2A1</div>
<div class="c" style="left:1121px;top:581.5px;width:66px;text-align:left;padding-left:4px;">STK 1671</div>
<div class="c" style="left:1187px;top:581.5px;width:225px;text-align:left;padding-left:4px;">100 trò chơi học Toán lớp 1</div>
<div class="c" style="left:1412px;top:581.5px;width:119px;text-align:left;padding-left:4px;">Đỗ Tiến Đạt</div>
<div class="c" style="left:1531px;top:581.5px;width:85px;text-align:right;padding-right:3px;letter-spacing:0.6px;">25/05/2021</div>
<div class="c" style="left:1616px;top:581.5px;width:87px;text-align:right;padding-right:3px;letter-spacing:0.6px;">28/05/2021</div>
<div class="c" style="left:1703px;top:581.5px;width:66px;text-align:right;padding-right:3px;letter-spacing:0.6px;">42</div>
<div class="c" style="left:853px;top:601.0px;width:33px;text-align:center;">8</div>
<div class="c" style="left:886px;top:601.0px;width:159px;text-align:left;padding-left:4px;">Bùi Hải Đăng</div>
<div class="c" style="left:1045px;top:601.0px;width:76px;text-align:left;padding-left:4px;">Lớp 2A1</div>
<div class="c" style="left:1121px;top:601.0px;width:66px;text-align:left;padding-left:4px;">SNV&nbsp; 715</div>
<div class="c" style="left:1187px;top:601.0px;width:225px;text-align:left;padding-left:4px;">Nhan đề sách hai</div>
<div class="c" style="left:1412px;top:601.0px;width:119px;text-align:left;padding-left:4px;">Trang Thu</div>
<div class="c" style="left:1531px;top:601.0px;width:85px;text-align:right;padding-right:3px;letter-spacing:0.6px;">25/05/2021</div>
<div class="c" style="left:1616px;top:601.0px;width:87px;text-align:right;padding-right:3px;letter-spacing:0.6px;">28/05/2021</div>
<div class="c" style="left:1703px;top:601.0px;width:66px;text-align:right;padding-right:3px;letter-spacing:0.6px;">42</div>
<div class="c" style="left:853px;top:626.5px;width:33px;text-align:center;">9</div>
<div class="c" style="left:886px;top:626.5px;width:159px;text-align:left;padding-left:4px;">Lý Thái Bảo</div>
<div class="c" style="left:1045px;top:626.5px;width:76px;text-align:left;padding-left:4px;">Lớp 2A1</div>
<div class="c" style="left:1121px;top:626.5px;width:66px;text-align:left;padding-left:4px;">STN 1919</div>
<div class="c" style="left:1187px;top:619.5px;width:225px;text-align:left;padding-left:4px;">Câu đố tuổi thơ chơi mà học, học mà<br>chơi</div>
<div class="c" style="left:1412px;top:626.5px;width:119px;text-align:left;padding-left:4px;">Kỳ Duyên</div>
<div class="c" style="left:1531px;top:626.5px;width:85px;text-align:right;padding-right:3px;letter-spacing:0.6px;">05/06/2021</div>
<div class="c" style="left:1616px;top:626.5px;width:87px;text-align:right;padding-right:3px;letter-spacing:0.6px;">08/06/2021</div>
<div class="c" style="left:1703px;top:626.5px;width:66px;text-align:right;padding-right:3px;letter-spacing:0.6px;">31</div>
<div class="c" style="left:853px;top:652.0px;width:33px;text-align:center;">10</div>
<div class="c" style="left:886px;top:652.0px;width:159px;text-align:left;padding-left:4px;">Lý Thái Bảo</div>
<div class="c" style="left:1045px;top:652.0px;width:76px;text-align:left;padding-left:4px;">Lớp 2A1</div>
<div class="c" style="left:1121px;top:652.0px;width:66px;text-align:left;padding-left:4px;">SNV&nbsp; 717</div>
<div class="c" style="left:1187px;top:652.0px;width:225px;text-align:left;padding-left:4px;">Nhan đề sách ba</div>
<div class="c" style="left:1412px;top:652.0px;width:119px;text-align:left;padding-left:4px;">Trang Thu</div>
<div class="c" style="left:1531px;top:652.0px;width:85px;text-align:right;padding-right:3px;letter-spacing:0.6px;">05/06/2021</div>
<div class="c" style="left:1616px;top:652.0px;width:87px;text-align:right;padding-right:3px;letter-spacing:0.6px;">08/06/2021</div>
<div class="c" style="left:1703px;top:652.0px;width:66px;text-align:right;padding-right:3px;letter-spacing:0.6px;">31</div>
<div class="c" style="left:853px;top:678.0px;width:33px;text-align:center;">11</div>
<div class="c" style="left:886px;top:678.0px;width:159px;text-align:left;padding-left:4px;">Trần Quốc Bảo</div>
<div class="c" style="left:1045px;top:678.0px;width:76px;text-align:left;padding-left:4px;">Lớp 2A1</div>
<div class="c" style="left:1121px;top:678.0px;width:66px;text-align:left;padding-left:4px;">UD_0005</div>
<div class="c" style="left:1187px;top:671.0px;width:225px;text-align:left;padding-left:4px;">100 bài tập luyện cách dùng dấu câu<br>Tiếng Việt</div>
<div class="c" style="left:1412px;top:678.0px;width:119px;text-align:left;padding-left:4px;">Nguyễn Quang Ninh</div>
<div class="c" style="left:1531px;top:678.0px;width:85px;text-align:right;padding-right:3px;letter-spacing:0.6px;">17/06/2021</div>
<div class="c" style="left:1616px;top:678.0px;width:87px;text-align:right;padding-right:3px;letter-spacing:0.6px;">20/06/2021</div>
<div class="c" style="left:1703px;top:678.0px;width:66px;text-align:right;padding-right:3px;letter-spacing:0.6px;">19</div>
<div class="c" style="left:853px;top:710.0px;width:33px;text-align:center;">12</div>
<div class="c" style="left:886px;top:710.0px;width:159px;text-align:left;padding-left:4px;">Trần Nhật Anh</div>
<div class="c" style="left:1045px;top:710.0px;width:76px;text-align:left;padding-left:4px;">Lớp 2A1</div>
<div class="c" style="left:1121px;top:703.0px;width:66px;text-align:left;padding-left:4px;">UD3_0000<br>1</div>
<div class="c" style="left:1187px;top:710.0px;width:225px;text-align:left;padding-left:4px;">100 bài văn ứng dụng 3</div>
<div class="c" style="left:1412px;top:710.0px;width:119px;text-align:left;padding-left:4px;">Hoàng Đức Duy</div>
<div class="c" style="left:1531px;top:710.0px;width:85px;text-align:right;padding-right:3px;letter-spacing:0.6px;">23/06/2021</div>
<div class="c" style="left:1616px;top:710.0px;width:87px;text-align:right;padding-right:3px;letter-spacing:0.6px;">26/06/2021</div>
<div class="c" style="left:1703px;top:710.0px;width:66px;text-align:right;padding-right:3px;letter-spacing:0.6px;">13</div>
<div class="c" style="left:853px;top:742.0px;width:33px;text-align:center;">13</div>
<div class="c" style="left:886px;top:742.0px;width:159px;text-align:left;padding-left:4px;">Trần Nhật Anh</div>
<div class="c" style="left:1045px;top:742.0px;width:76px;text-align:left;padding-left:4px;">Lớp 2A1</div>
<div class="c" style="left:1121px;top:735.0px;width:66px;text-align:left;padding-left:4px;">UD3_0000<br>2</div>
<div class="c" style="left:1187px;top:742.0px;width:225px;text-align:left;padding-left:4px;">100 bài văn ứng dụng 3</div>
<div class="c" style="left:1412px;top:742.0px;width:119px;text-align:left;padding-left:4px;">Hoàng Đức Duy</div>
<div class="c" style="left:1531px;top:742.0px;width:85px;text-align:right;padding-right:3px;letter-spacing:0.6px;">23/06/2021</div>
<div class="c" style="left:1616px;top:742.0px;width:87px;text-align:right;padding-right:3px;letter-spacing:0.6px;">26/06/2021</div>
<div class="c" style="left:1703px;top:742.0px;width:66px;text-align:right;padding-right:3px;letter-spacing:0.6px;">13</div>
<div class="c" style="left:853px;top:774.0px;width:33px;text-align:center;">14</div>
<div class="c" style="left:886px;top:774.0px;width:159px;text-align:left;padding-left:4px;">Trần Nhật Anh</div>
<div class="c" style="left:1045px;top:774.0px;width:76px;text-align:left;padding-left:4px;">Lớp 2A1</div>
<div class="c" style="left:1121px;top:767.0px;width:66px;text-align:left;padding-left:4px;">UD3_0000<br>3</div>
<div class="c" style="left:1187px;top:774.0px;width:225px;text-align:left;padding-left:4px;">100 bài văn ứng dụng 3</div>
<div class="c" style="left:1412px;top:774.0px;width:119px;text-align:left;padding-left:4px;">Hoàng Đức Duy</div>
<div class="c" style="left:1531px;top:774.0px;width:85px;text-align:right;padding-right:3px;letter-spacing:0.6px;">23/06/2021</div>
<div class="c" style="left:1616px;top:774.0px;width:87px;text-align:right;padding-right:3px;letter-spacing:0.6px;">26/06/2021</div>
<div class="c" style="left:1703px;top:774.0px;width:66px;text-align:right;padding-right:3px;letter-spacing:0.6px;">13</div>
<div class="c" style="left:853px;top:806.0px;width:33px;text-align:center;">15</div>
<div class="c" style="left:886px;top:806.0px;width:159px;text-align:left;padding-left:4px;">Trần Nhật Anh</div>
<div class="c" style="left:1045px;top:806.0px;width:76px;text-align:left;padding-left:4px;">Lớp 2A1</div>
<div class="c" style="left:1121px;top:806.0px;width:66px;text-align:left;padding-left:4px;">STK 2987</div>
<div class="c" style="left:1187px;top:806.0px;width:225px;text-align:left;padding-left:4px;">10 tình huống bất trắc cần dạy trẻ</div>
<div class="c" style="left:1412px;top:806.0px;width:119px;text-align:left;padding-left:4px;">Nguyễn Vũ Đức Duy</div>
<div class="c" style="left:1531px;top:806.0px;width:85px;text-align:right;padding-right:3px;letter-spacing:0.6px;">23/06/2021</div>
<div class="c" style="left:1616px;top:806.0px;width:87px;text-align:right;padding-right:3px;letter-spacing:0.6px;">26/06/2021</div>
<div class="c" style="left:1703px;top:806.0px;width:66px;text-align:right;padding-right:3px;letter-spacing:0.6px;">13</div>
<div class="c" style="left:853px;top:832.0px;width:33px;text-align:center;">16</div>
<div class="c" style="left:886px;top:832.0px;width:159px;text-align:left;padding-left:4px;">Nguyễn Trịnh Lan Anh</div>
<div class="c" style="left:1045px;top:832.0px;width:76px;text-align:left;padding-left:4px;">Lớp 2A1</div>
<div class="c" style="left:1121px;top:832.0px;width:66px;text-align:left;padding-left:4px;">STK 2959</div>
<div class="c" style="left:1187px;top:832.0px;width:225px;text-align:left;padding-left:4px;">126 trò vui chơi tập thể chọn lọc</div>
<div class="c" style="left:1412px;top:832.0px;width:119px;text-align:left;padding-left:4px;">Tôn Thất Đông</div>
<div class="c" style="left:1531px;top:832.0px;width:85px;text-align:right;padding-right:3px;letter-spacing:0.6px;">01/07/2021</div>
<div class="c" style="left:1616px;top:832.0px;width:87px;text-align:right;padding-right:3px;letter-spacing:0.6px;">04/07/2021</div>
<div class="c" style="left:1703px;top:832.0px;width:66px;text-align:right;padding-right:3px;letter-spacing:0.6px;">5</div>
  <div class="abs" style="left:1311px;top:575px;width:0;height:0"><div style="position:absolute;left:0;top:0;transform:translate(-50%,-50%) rotate(-45deg);font-family:'Liberation Serif',serif;font-weight:bold;font-size:60px;line-height:60px;color:#5b9bc9;white-space:nowrap;opacity:0.95;-webkit-text-stroke:3.6px #5b9bc9">BÁO CÁO MẪU</div></div>
  <div class="doc" style="left:1759px;top:858px;font-size:12px;font-style:italic">1</div>

  <!-- collapse tabs -->
  <div class="abs" style="left:721px;top:499px;width:12px;height:48px;background:#0cbc6c;border-radius:5px 0 0 5px"></div>
  <div class="abs" style="left:1897px;top:456px;width:20px;height:40px;background:#0a6fe3;border-radius:6px 0 0 6px;box-shadow:0 0 14px rgba(0,0,0,0.13)"></div>

  <svg class="abs" style="left:-2px;top:-2px" width="1919" height="955">
    <path d="M725.8 524.8 L733 518.8 V530.9 Z" fill="#fff"/>
    <path d="M1911.6 473.8 L1906.8 478 L1911.6 482.2" fill="none" stroke="#fff" stroke-width="2.6" stroke-linecap="round" stroke-linejoin="round"/>
  </svg>
  <!-- annotations -->
  <div class="redbox" style="left:-1px;top:528px;width:254px;height:63px"></div>
  <div class="badge" style="left:226px;top:571px">1</div>
  <div class="redbox" style="left:278px;top:295px;width:451px;height:56px"></div>
  <div class="badge" style="left:699px;top:286px">2</div>
  <div class="redbox" style="left:1718px;top:143px;width:162px;height:73px"></div>
  <div class="badge" style="left:1698px;top:123px">3</div>
</div>
</body></html>
